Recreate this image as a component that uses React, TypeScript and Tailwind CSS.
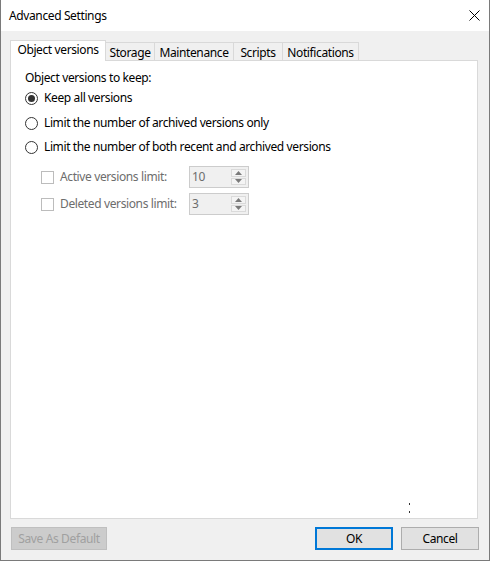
import React from "react";

const font = { fontFamily: '"Noto Sans", "Segoe UI", sans-serif', letterSpacing: "-0.38px" };

function Radio({ checked, label }: { checked?: boolean; label: string }) {
  return (
    <div className="flex items-center h-[20px]">
      <div className="w-[13px] h-[13px] rounded-full border border-[#333333] bg-white flex items-center justify-center">
        {checked && <div className="w-[7px] h-[7px] rounded-full bg-[#333333]" />}
      </div>
      <span className="ml-[6px] text-[12px] text-black leading-[16px]">{label}</span>
    </div>
  );
}

function Spin({ value }: { value: string }) {
  return (
    <div className="relative w-[60px] h-[22px] border border-[#cccccc] bg-[#f0f0f0] flex items-center">
      <span className="ml-[2px] text-[12px] text-[#6d6d6d] leading-[16px]">{value}</span>
      <div className="absolute right-[2px] top-[2px] w-[15px] h-[16px] flex flex-col gap-[1px]">
        <div className="flex-1 bg-[#f4f4f4] border border-[#dadada] flex items-center justify-center">
          <svg width="7" height="4" viewBox="0 0 7 4"><path d="M3.5 0 L7 4 L0 4 Z" fill="#7a7a7a" /></svg>
        </div>
        <div className="flex-1 bg-[#f4f4f4] border border-[#dadada] flex items-center justify-center">
          <svg width="7" height="4" viewBox="0 0 7 4"><path d="M0 0 L7 0 L3.5 4 Z" fill="#7a7a7a" /></svg>
        </div>
      </div>
    </div>
  );
}

function CheckRow({ label, value, mt }: { label: string; value: string; mt: string }) {
  return (
    <div className={`flex items-center h-[22px] ${mt}`}>
      <div className="ml-[16px] w-[13px] h-[13px] border border-[#bcbcbc] bg-white" />
      <span className="ml-[6px] w-[129px] text-[12px] text-[#6d6d6d] leading-[16px]">{label}</span>
      <Spin value={value} />
    </div>
  );
}

export default function App() {
  const tabs = [
    { name: "Storage", w: "w-[49px]" },
    { name: "Maintenance", w: "w-[79px]" },
    { name: "Scripts", w: "w-[49px]" },
    { name: "Notifications", w: "w-[76px]" },
  ];
  return (
    <div
      style={font}
      className="w-[490px] h-[561px] bg-[#f0f0f0] border-l border-r border-b border-[#7a7a7a] flex flex-col text-black"
    >
      <div className="h-[31px] bg-white flex items-center justify-between shrink-0">
        <span className="ml-[8px] text-[12px] leading-[16px]">Advanced Settings</span>
        <svg className="mr-[9px]" width="11" height="11" viewBox="0 0 11 11">
          <path d="M0.5 0.5 L10.5 10.5 M10.5 0.5 L0.5 10.5" stroke="#000" strokeWidth="1" />
        </svg>
      </div>

      <div className="ml-[9px] mt-[9px] w-[468px] flex flex-col">
        <div className="flex items-end h-[20px]">
          <div className="relative z-10 w-[96px] h-[21px] -mb-px bg-white border-l border-t border-r border-[#d9d9d9] flex items-start justify-center pt-[1px]">
            <span className="text-[12px] leading-[16px]">Object versions</span>
          </div>
          {tabs.map((t) => (
            <div
              key={t.name}
              className={`${t.w} h-[18px] border-t border-r border-[#d9d9d9] flex items-center justify-center pt-[2px]`}
            >
              <span className="text-[12px] leading-[16px]">{t.name}</span>
            </div>
          ))}
        </div>

        <div className="relative h-[459px] bg-white border border-[#d9d9d9] flex flex-col pl-[14px]">
          <div className="mt-[9px] h-[16px] text-[12px] leading-[16px]">Object versions to keep:</div>
          <div className="mt-[2px]">
            <Radio checked label="Keep all versions" />
          </div>
          <div className="mt-[5px]">
            <Radio label="Limit the number of archived versions only" />
          </div>
          <div className="mt-[4px]">
            <Radio label="Limit the number of both recent and archived versions" />
          </div>
          <CheckRow label="Active versions limit:" value="10" mt="mt-[9px]" />
          <CheckRow label="Deleted versions limit:" value="3" mt="mt-[5px]" />

          <div className="absolute left-[398px] top-[442px] w-[1px] h-[2px] bg-[#333333]" />
          <div className="absolute left-[398px] top-[450px] w-[1px] h-[2px] bg-[#333333]" />
        </div>
      </div>

      <div className="mt-[8px] flex items-center h-[23px]">
        <div className="ml-[10px] w-[96px] h-[23px] bg-[#cccccc] border border-[#bfbfbf] flex items-center justify-center">
          <span className="text-[12px] leading-[16px] text-[#a0a0a0]">Save As Default</span>
        </div>
        <div className="ml-[208px] w-[78px] h-[23px] bg-[#e1e1e1] border-2 border-[#0078d7] flex items-center justify-center">
          <span className="text-[12px] leading-[16px]">OK</span>
        </div>
        <div className="ml-[8px] w-[78px] h-[23px] bg-[#e1e1e1] border border-[#adadad] flex items-center justify-center">
          <span className="text-[12px] leading-[16px]">Cancel</span>
        </div>
      </div>
    </div>
  );
}
